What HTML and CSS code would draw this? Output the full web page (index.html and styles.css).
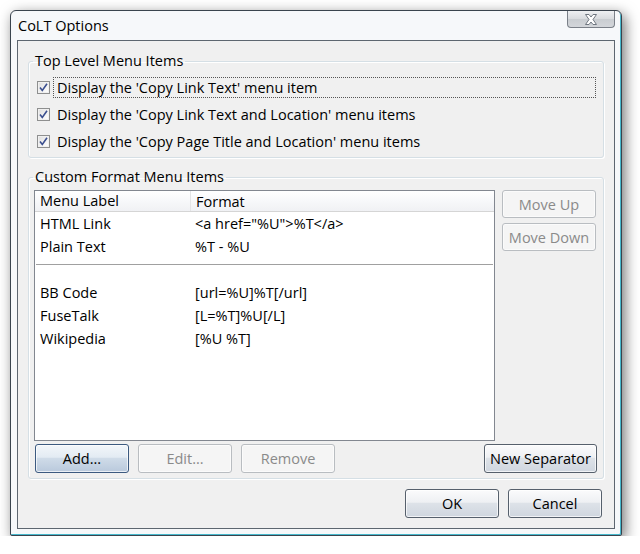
FILE: index.html
```html
<!DOCTYPE html>
<html>
<head>
<meta charset="utf-8">
<title>CoLT Options</title>
<link rel="stylesheet" href="styles.css">
</head>
<body>
<div class="window">
  <div class="titlebar">
    <span class="title">CoLT Options</span>
    <button class="close" aria-label="Close">
      <svg width="20" height="13" viewBox="0 0 20 13">
        <path d="M4.5 1.5 H8 L10 4 L12 1.5 H15.5 L12 6.5 L15.5 11.5 H12 L10 9 L8 11.5 H4.5 L8 6.5 Z" fill="#ffffff" stroke="#6f7780" stroke-width="1" stroke-linejoin="round"/>
      </svg>
    </button>
  </div>
  <div class="client">
    <fieldset class="group group-top">
      <legend>Top Level Menu Items</legend>
      <div class="checks">
        <label class="check"><span class="box"><svg width="13" height="13" viewBox="0 0 13 13"><path d="M3 6.5 L5.3 9.5 L10 2.8" fill="none" stroke="#3b4f8f" stroke-width="1.6"/></svg></span><span class="label focus">Display the 'Copy Link Text' menu item</span></label>
        <label class="check"><span class="box"><svg width="13" height="13" viewBox="0 0 13 13"><path d="M3 6.5 L5.3 9.5 L10 2.8" fill="none" stroke="#3b4f8f" stroke-width="1.6"/></svg></span><span class="label">Display the 'Copy Link Text and Location' menu items</span></label>
        <label class="check"><span class="box"><svg width="13" height="13" viewBox="0 0 13 13"><path d="M3 6.5 L5.3 9.5 L10 2.8" fill="none" stroke="#3b4f8f" stroke-width="1.6"/></svg></span><span class="label">Display the 'Copy Page Title and Location' menu items</span></label>
      </div>
    </fieldset>
    <fieldset class="group group-custom">
      <legend>Custom Format Menu Items</legend>
      <div class="custom-body">
        <div class="list-row">
          <div class="list">
            <div class="list-head">
              <span class="col1">Menu Label</span>
              <span class="col2">Format</span>
            </div>
            <div class="item"><span class="col1">HTML Link</span><span class="col2">&lt;a href="%U"&gt;%T&lt;/a&gt;</span></div>
            <div class="item"><span class="col1">Plain Text</span><span class="col2">%T - %U</span></div>
            <div class="item sep"><span class="rule"></span></div>
            <div class="item"><span class="col1">BB Code</span><span class="col2">[url=%U]%T[/url]</span></div>
            <div class="item"><span class="col1">FuseTalk</span><span class="col2">[L=%T]%U[/L]</span></div>
            <div class="item"><span class="col1">Wikipedia</span><span class="col2">[%U %T]</span></div>
          </div>
          <div class="side-buttons">
            <button class="btn disabled">Move Up</button>
            <button class="btn disabled">Move Down</button>
          </div>
        </div>
        <div class="bottom-row">
          <div class="left-buttons">
            <button class="btn default">Add...</button>
            <button class="btn disabled">Edit...</button>
            <button class="btn disabled">Remove</button>
          </div>
          <button class="btn wide">New Separator</button>
        </div>
      </div>
    </fieldset>
    <div class="dialog-buttons">
      <button class="btn">OK</button>
      <button class="btn">Cancel</button>
    </div>
  </div>
</div>
</body>
</html>
```

FILE: styles.css
```css
html, body {
  margin: 0;
  padding: 0;
  background: #ffffff;
}

body {
  font-family: "Open Sans", "Noto Sans", "Liberation Sans", sans-serif;
  font-size: 14.5px;
  color: #000000;
  padding: 10px 0 0 10px;
}

.window {
  width: 612px;
  box-sizing: border-box;
  background: #f6f8fa;
  border: 1px solid #3a444e;
  border-radius: 6px 6px 2px 2px;
  padding: 0 6px 6px 6px;
  box-shadow: inset -1px -1px 0 #46b8cc, 3px 4px 14px rgba(0, 0, 0, 0.55);
}

.titlebar {
  height: 29px;
  display: flex;
  justify-content: space-between;
  align-items: flex-start;
  margin-right: -6px;
}

.title {
  font-size: 14.5px;
  line-height: 29px;
  padding-left: 1px;
}

.close {
  width: 48px;
  height: 17px;
  margin: 0 6px 0 0;
  padding: 0;
  border: 1px solid #7a8088;
  border-top: none;
  border-radius: 0 0 4px 4px;
  background: linear-gradient(#eef0f2, #d8dbde 50%, #c9cdd1 51%, #d3d6da);
  display: flex;
  align-items: center;
  justify-content: center;
}

.client {
  background: #f0f0f0;
  border: 1px solid #5d6670;
  padding: 0 10px 10px 10px;
}

.group {
  margin: 0;
  padding: 0;
  border: 1px solid #d5dfe5;
  border-radius: 3px;
  box-shadow: inset 1px 1px 0 #ffffff, 1px 1px 0 #ffffff;
  min-width: 0;
}

.group legend {
  padding: 0 2px;
  margin-left: 4px;
  line-height: 20px;
  font-size: 14.5px;
}

.group-top {
  margin-top: 10px;
}

.checks {
  display: flex;
  flex-direction: column;
  gap: 6px;
  padding: 6px 0 5px 8px;
}

.check {
  display: flex;
  align-items: center;
  height: 21px;
}

.box {
  width: 13px;
  height: 13px;
  box-sizing: border-box;
  border: 1px solid #8e8f8f;
  background: linear-gradient(135deg, #dcdcdc, #f4f4f4 60%, #ffffff);
  box-shadow: inset 0 0 0 1px #f0f0f0;
  position: relative;
  flex: none;
}

.box svg {
  position: absolute;
  left: -1px;
  top: -1px;
}

.label {
  margin-left: 3px;
  padding: 0 3px;
  line-height: 19px;
}

.label.focus {
  flex: 1;
  margin-right: 7px;
  border: 1px dotted #555555;
}

.label:not(.focus) {
  border: 1px solid transparent;
}

.group-custom {
  margin-top: 9px;
}

.custom-body {
  padding: 3px 7px 5px 5px;
}

.list-row {
  display: flex;
  gap: 7px;
  align-items: flex-start;
}

.list {
  width: 461px;
  height: 251px;
  box-sizing: border-box;
  background: #ffffff;
  border: 1px solid #828790;
  flex: none;
}

.list-head {
  height: 20px;
  display: flex;
  align-items: center;
  background: linear-gradient(#ffffff, #f7f8fa 50%, #f0f1f4);
  border-bottom: 1px solid #d5d5d5;
}

.list-head .col1 {
  border-right: 1px solid #e3e4e6;
  height: 20px;
  line-height: 20px;
}

.col1 {
  width: 150px;
  padding-left: 5px;
  flex: none;
}

.col2 {
  padding-left: 5px;
}

.item {
  height: 23px;
  display: flex;
  align-items: center;
}

.item.sep {
  align-items: flex-start;
}

.rule {
  display: block;
  margin: 6px 1px 0 1px;
  width: 100%;
  border-top: 1px solid #a0a0a0;
}

.side-buttons {
  display: flex;
  flex-direction: column;
  gap: 5px;
}

.btn {
  font-family: inherit;
  font-size: 14.5px;
  width: 94px;
  height: 28px;
  padding: 0;
  box-sizing: border-box;
  color: #000000;
  border: 1px solid #56606c;
  border-radius: 3px;
  background: linear-gradient(#fbfbfc, #eef0f3 45%, #dde2e8 50%, #cfd6df);
  box-shadow: inset 0 0 0 1px rgba(255, 255, 255, 0.7);
}

.btn.disabled {
  color: #8a8a8a;
  border-color: #b9bdc1;
  background: #f5f5f5;
  box-shadow: inset 0 0 0 1px #fbfbfb;
}

.btn.default {
  border-color: #3c5a80;
  background: linear-gradient(#f2f6fa, #e3ebf3 45%, #cfdbe8 50%, #b9c9dc);
}

.bottom-row {
  display: flex;
  justify-content: space-between;
  margin-top: 3px;
}

.bottom-row .btn {
  height: 29px;
}

.left-buttons {
  display: flex;
  gap: 9px;
  padding-left: 1px;
}

.btn.wide {
  width: 113px;
  margin-right: -1px;
}

.dialog-buttons {
  display: flex;
  justify-content: flex-end;
  gap: 9px;
  margin-top: 10px;
  padding-right: 2px;
}

.dialog-buttons .btn {
  height: 29px;
}
```
